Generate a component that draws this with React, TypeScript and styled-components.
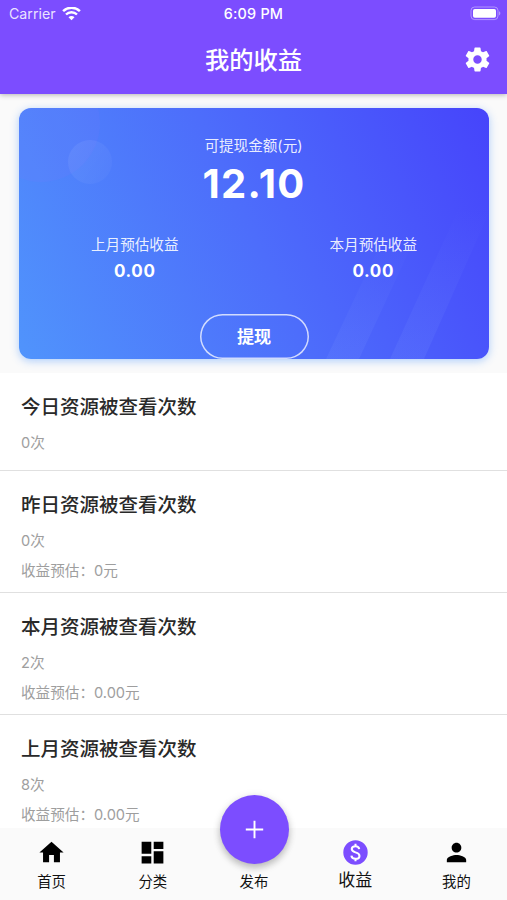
import React from "react";
import styled, { createGlobalStyle } from "styled-components";

const GlobalStyle = createGlobalStyle`
  * { box-sizing: border-box; }
  body { margin: 0; background: #fff; }
`;

const Screen = styled.div`
  position: relative;
  display: flex;
  flex-direction: column;
  width: 507px;
  height: 900px;
  overflow: hidden;
  background: #fff;
  color: #212121;
  font-family: Inter, "Noto Sans CJK SC", sans-serif;
`;

const Header = styled.header`
  position: relative;
  z-index: 1;
  flex: 0 0 94px;
  background: #7c4dff;
  color: #fff;
  box-shadow: 0 1px 5px rgba(0, 0, 0, 0.28);
`;

const StatusBar = styled.div`
  display: grid;
  grid-template-columns: 1fr auto 1fr;
  align-items: center;
  height: 27px;
  padding: 1px 6px 0 9px;
  font-size: 14.2px;
  line-height: 20px;
`;

const Carrier = styled.div`
  display: flex;
  align-items: center;
  gap: 6px;
  color: rgba(255, 255, 255, 0.86);
`;

const Clock = styled.div`
  margin-left: -3px;
  font-size: 14.4px;
  font-weight: 500;
  letter-spacing: 0.2px;
`;

const Battery = styled.div`
  display: flex;
  justify-content: flex-end;
  margin-top: -2px;
`;

const TitleBar = styled.div`
  display: grid;
  grid-template-columns: 44px 1fr 44px;
  align-items: center;
  height: 66px;
  padding: 0 8px;
`;

const PageTitle = styled.h1`
  grid-column: 2;
  margin: 0;
  text-align: center;
  font-size: 24.3px;
  font-weight: 500;
  line-height: 36px;
`;

const IconButton = styled.button`
  display: grid;
  place-items: center;
  padding: 0 0 1px;
  border: 0;
  background: none;
  color: #fff;
`;

const CardArea = styled.section`
  flex: 0 0 279px;
  padding: 14px 18px 0 19px;
  background: #fafafa;
`;

const Card = styled.div`
  position: relative;
  display: flex;
  flex-direction: column;
  align-items: center;
  height: 251px;
  border-radius: 12px;
  background: linear-gradient(65deg, #5094fc 0%, #4d6dfb 50%, #4644fb 100%);
  box-shadow: 0 2px 8px rgba(80, 151, 252, 0.45);
  color: #fff;
`;

const CardArt = styled.svg`
  position: absolute;
  inset: 0;
  width: 100%;
  height: 100%;
  border-radius: 12px;
`;

const Caption = styled.div`
  position: relative;
  height: 22px;
  line-height: 22px;
  font-size: 14.6px;
  color: rgba(255, 255, 255, 0.9);
`;

const BalanceCaption = styled(Caption)`
  margin-top: 27px;
  margin-right: 1px;
`;

const Balance = styled.div`
  position: relative;
  height: 54px;
  line-height: 54px;
  font-size: 40px;
  font-weight: 700;
  letter-spacing: 1.3px;
`;

const Estimates = styled.div`
  position: relative;
  display: grid;
  grid-template-columns: 1fr 1fr;
  width: 477px;
  margin-top: 23px;
`;

const Estimate = styled.div`
  display: flex;
  flex-direction: column;
  align-items: center;
`;

const EstimateValue = styled.div`
  height: 30px;
  line-height: 30px;
  font-size: 17px;
  font-weight: 700;
  letter-spacing: 0.6px;
`;

const Withdraw = styled.button`
  position: relative;
  width: 109px;
  height: 46px;
  margin-top: 28px;
  padding: 0;
  border: 0;
  border-radius: 23px;
  box-shadow: inset 0 0 0 1.5px rgba(255, 255, 255, 0.75);
  background: transparent;
  color: #fff;
  font: 700 17.1px/44px Inter, "Noto Sans CJK SC", sans-serif;
`;

const List = styled.main`
  flex: 1 1 0;
  min-height: 0;
  overflow: hidden;
`;

const Row = styled.article<{ $short?: boolean }>`
  height: ${(p) => (p.$short ? 98 : 122)}px;
  padding: 20px 21px 0;
  border-bottom: 1px solid #e0e0e0;
`;

const RowTitle = styled.h2`
  margin: 0 0 6px;
  font-size: 19.5px;
  line-height: 29px;
  font-weight: 500;
  color: #292929;
`;

const RowText = styled.div`
  height: 30px;
  line-height: 30px;
  font-size: 14.6px;
  color: #9e9e9e;
`;

const BottomNav = styled.nav`
  flex: 0 0 72px;
  display: grid;
  grid-template-columns: repeat(5, 1fr);
  padding-left: 1px;
  background: #fafafa;
`;

const NavItem = styled.a<{ $active?: boolean }>`
  display: flex;
  flex-direction: column;
  align-items: center;
  padding-top: 10px;
  color: ${(p) => (p.$active ? "#7c4dff" : "#000")};
`;

const NavIcon = styled.span`
  display: block;
  height: 29px;
`;

const NavLabel = styled.span<{ $active?: boolean }>`
  margin-top: ${(p) => (p.$active ? 1 : 3)}px;
  line-height: 24px;
  font-size: ${(p) => (p.$active ? 17 : 14.4)}px;
  color: #111;
`;

const PublishButton = styled.button`
  position: absolute;
  left: 219.5px;
  top: 795px;
  z-index: 2;
  display: grid;
  place-items: center;
  width: 69px;
  height: 69px;
  padding: 0;
  border: 0;
  border-radius: 50%;
  background: #7c4dff;
  color: #fff;
  box-shadow: 0 4px 7px rgba(0, 0, 0, 0.22), 0 1px 10px rgba(0, 0, 0, 0.08);
`;

const paths = {
  settings:
    "M19.43 12.98c.04-.32.07-.64.07-.98s-.03-.66-.07-.98l2.11-1.65c.19-.15.24-.42.12-.64l-2-3.46c-.12-.22-.39-.3-.61-.22l-2.49 1c-.52-.4-1.08-.73-1.69-.98l-.38-2.65C14.46 2.18 14.25 2 14 2h-4c-.25 0-.46.18-.49.42l-.38 2.65c-.61.25-1.17.59-1.69.98l-2.49-1c-.23-.09-.49 0-.61.22l-2 3.46c-.13.22-.07.49.12.64l2.11 1.65c-.04.32-.07.65-.07.98s.03.66.07.98l-2.11 1.65c-.19.15-.24.42-.12.64l2 3.46c.12.22.39.3.61.22l2.49-1c.52.4 1.08.73 1.69.98l.38 2.65c.03.24.24.42.49.42h4c.25 0 .46-.18.49-.42l.38-2.65c.61-.25 1.17-.59 1.69-.98l2.49 1c.23.09.49 0 .61-.22l2-3.46c.12-.22.07-.49-.12-.64l-2.11-1.65zM12 15.5c-1.93 0-3.5-1.57-3.5-3.5s1.57-3.5 3.5-3.5 3.5 1.57 3.5 3.5-1.57 3.5-3.5 3.5z",
  home: "M10 20v-6h4v6h5v-8h3L12 3 2 12h3v8z",
  dashboard: "M3 13h8V3H3v10zm0 8h8v-6H3v6zm10 0h8V11h-8v10zm0-18v6h8V3h-8z",
  add: "M19.2 12.8h-6.4v6.4h-1.6v-6.4H4.8v-1.6h6.4V4.8h1.6v6.4h6.4z",
  money: "M22.1 12a10.1 10.1 0 1 1-20.2 0 10.1 10.1 0 0 1 20.2 0z",
  person:
    "M12 12c2.21 0 4-1.79 4-4s-1.79-4-4-4-4 1.79-4 4 1.79 4 4 4zm0 2c-2.67 0-8 1.34-8 4v2h16v-2c0-2.66-5.33-4-8-4z",
};

type IconName = keyof typeof paths;

const Icon = ({ name, size = 29 }: { name: IconName; size?: number }) => (
  <svg width={size} height={size} viewBox="0 0 24 24" fill="currentColor" display="block">
    <path d={paths[name]} />
    {name === "money" && (
      <path
        d="M15.1 9.2C14.8 7.600 13.600 6.800 12 6.800c-1.700 0-3.100.9-3.100 2.400 0 1.600 1.400 2.200 3.100 2.700s3.300 1.200 3.300 2.900c0 1.500-1.500 2.400-3.300 2.400s-3.200-.8-3.400-2.600M12 4.700v2.200M12 17.100v2.200"
        fill="none"
        stroke="#fff"
        strokeWidth="1.7"
      />
    )}
  </svg>
);

const Wifi = () => (
  <svg width="19" height="15" viewBox="0 0 19 15" fill="none" stroke="#fff">
    <path d="M1.1 4.2a12 12 0 0 1 16.800 0" strokeWidth="2.5" />
    <path d="M4 7.500a7.800 7.800 0 0 1 11 0" strokeWidth="2.4" />
    <path d="M9.500 13.300 6.500 10.200a4.200 4.200 0 0 1 6 0z" fill="#fff" stroke="none" />
  </svg>
);

const BatteryIcon = () => (
  <svg width="31" height="15" viewBox="0 0 31 15" fill="none">
    <rect x="1" y="1" width="27" height="12.6" rx="3.6" stroke="#fff" strokeOpacity=".4" />
    <rect x="3" y="3" width="23" height="8.8" rx="1.8" fill="#fff" />
    <path d="M29.2 5.3c1.5.6 1.5 3.5 0 4.1z" fill="#fff" fillOpacity=".5" />
  </svg>
);

const records = [
  { title: "今日资源被查看次数", lines: ["0次"] },
  { title: "昨日资源被查看次数", lines: ["0次", "收益预估：0元"] },
  { title: "本月资源被查看次数", lines: ["2次", "收益预估：0.00元"] },
  { title: "上月资源被查看次数", lines: ["8次", "收益预估：0.00元"] },
];

const tabs: { label: string; icon?: IconName; active?: boolean }[] = [
  { label: "首页", icon: "home" },
  { label: "分类", icon: "dashboard" },
  { label: "发布" },
  { label: "收益", icon: "money", active: true },
  { label: "我的", icon: "person" },
];

export default function App() {
  return (
    <Screen>
      <GlobalStyle />
      <Header>
        <StatusBar>
          <Carrier>
            Carrier <Wifi />
          </Carrier>
          <Clock>6:09 PM</Clock>
          <Battery>
            <BatteryIcon />
          </Battery>
        </StatusBar>
        <TitleBar>
          <PageTitle>我的收益</PageTitle>
          <IconButton aria-label="设置">
            <Icon name="settings" />
          </IconButton>
        </TitleBar>
      </Header>

      <CardArea>
        <Card>
          <CardArt viewBox="0 0 470 251" preserveAspectRatio="none">
            <defs>
              <linearGradient id="disc" x1="0" y1="0" x2="1" y2="0.6">
                <stop offset="0" stopColor="#fff" stopOpacity=".07" />
                <stop offset="1" stopColor="#fff" stopOpacity=".03" />
              </linearGradient>
              <linearGradient id="beam" x1="0" y1="1" x2="0" y2="0">
                <stop offset="0" stopColor="#7893ff" stopOpacity=".17" />
                <stop offset="1" stopColor="#7893ff" stopOpacity="0" />
              </linearGradient>
            </defs>
            <circle cx="22" cy="15" r="59" fill="#7779ff" fillOpacity=".15" />
            <circle cx="71" cy="54" r="22" fill="url(#disc)" />
            <path d="M307 251 365 128h32l-57 123z" fill="url(#beam)" />
            <path d="M371 251 440 100h32l-67 151z" fill="url(#beam)" />
          </CardArt>
          <BalanceCaption>可提现金额(元)</BalanceCaption>
          <Balance>12.10</Balance>
          <Estimates>
            <Estimate>
              <Caption>上月预估收益</Caption>
              <EstimateValue>0.00</EstimateValue>
            </Estimate>
            <Estimate>
              <Caption>本月预估收益</Caption>
              <EstimateValue>0.00</EstimateValue>
            </Estimate>
          </Estimates>
          <Withdraw>提现</Withdraw>
        </Card>
      </CardArea>

      <List>
        {records.map((r) => (
          <Row key={r.title} $short={r.lines.length === 1}>
            <RowTitle>{r.title}</RowTitle>
            {r.lines.map((line) => (
              <RowText key={line}>{line}</RowText>
            ))}
          </Row>
        ))}
      </List>

      <BottomNav>
        {tabs.map((t) => (
          <NavItem key={t.label} $active={t.active}>
            <NavIcon>{t.icon && <Icon name={t.icon} />}</NavIcon>
            <NavLabel $active={t.active}>{t.label}</NavLabel>
          </NavItem>
        ))}
      </BottomNav>
      <PublishButton aria-label="发布">
        <Icon name="add" />
      </PublishButton>
    </Screen>
  );
}
